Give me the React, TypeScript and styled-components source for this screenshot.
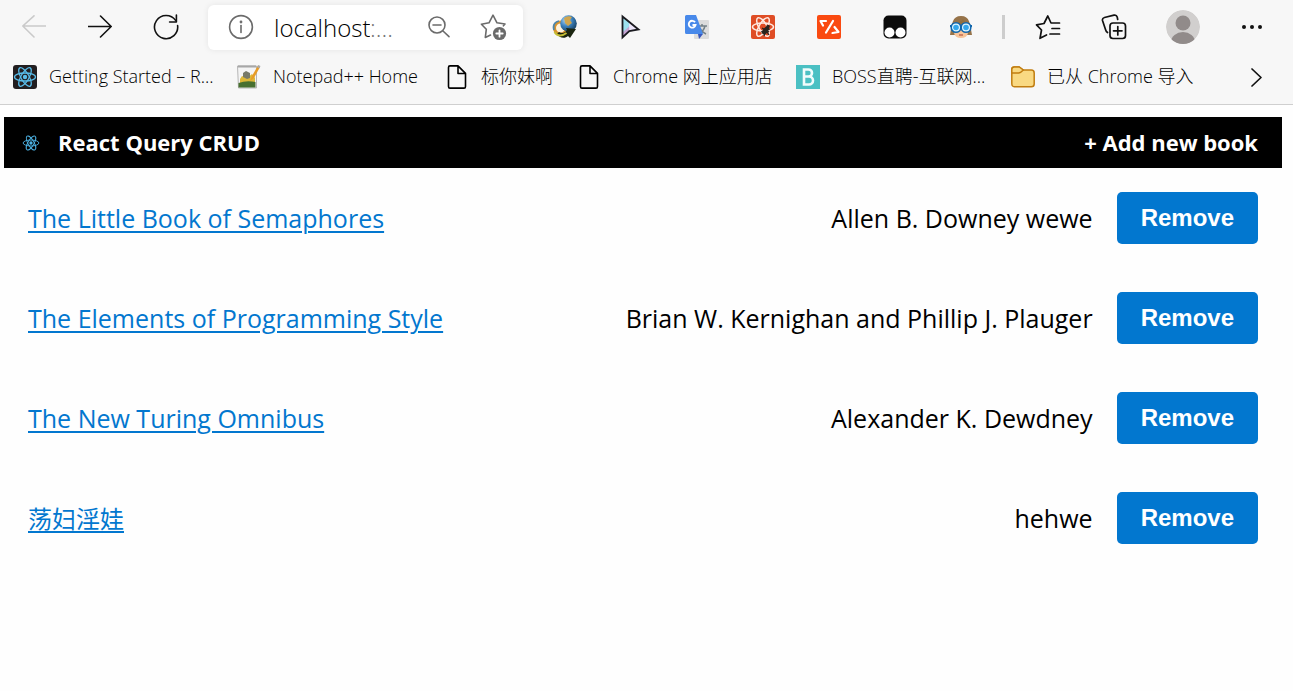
import React from "react";
import styled, { createGlobalStyle } from "styled-components";

const GlobalStyle = createGlobalStyle`
  *, *::before, *::after { box-sizing: border-box; }
  html { background: #fefefe; }
  body {
    margin: 0;
    color: #000;
    font-family: "Open Sans", "Noto Sans CJK SC", sans-serif;
    font-size: 24px;
  }
`;

const BrowserChrome = styled.header`
  background: #f7f7f7;
  border-bottom: 1px solid #cfcfcf;
  font-weight: 300;
`;

const Toolbar = styled.div`
  display: flex;
  align-items: center;
  height: 54px;
  padding: 0 8px 0 1px;
`;

const ToolButton = styled.button<{ $wide?: boolean }>`
  display: flex;
  flex: none;
  align-items: center;
  justify-content: center;
  width: ${(p) => (p.$wide ? 72 : 66)}px;
  height: 54px;
  padding: 0;
  border: 0;
  background: none;
  color: #111;

  &:disabled {
    color: #cacaca;
  }
`;

const AddressBar = styled.div`
  display: flex;
  flex: 1;
  align-items: center;
  min-width: 0;
  height: 45px;
  margin: 0 9px;
  padding: 0 16px 0 20px;
  border-radius: 6px;
  background: #fff;
  box-shadow: 0 0 6px rgba(0, 0, 0, 0.08);
`;

const AddressButton = styled.button`
  display: flex;
  flex: none;
  padding: 0;
  border: 0;
  background: none;
  color: #6b6b6b;
`;

const AddressText = styled.div`
  display: flex;
  flex: 1;
  align-items: center;
  min-width: 0;
  margin-left: 20px;
  padding-top: 2px;
  color: #767676;
  line-height: 32px;
`;

const AddressInput = styled.input`
  width: 96px;
  padding: 0;
  border: 0;
  outline: 0;
  background: none;
  color: #000;
  font: inherit;
  font-size: 24px;
  field-sizing: content;
`;

const AddressTools = styled.div`
  display: flex;
  align-items: center;
  gap: 28px;
`;

const Separator = styled.span`
  flex: none;
  width: 3px;
  height: 24px;
  margin: 0 10px 0 8px;
  background: #cdcdcd;
`;

const BookmarkBar = styled.nav`
  display: flex;
  align-items: center;
  gap: 24px;
  height: 50px;
  padding: 0 25px 4px 13px;
`;

const Bookmark = styled.a`
  display: flex;
  flex: none;
  align-items: center;
  gap: 12px;
  color: #000;
  font-size: 18px;
  line-height: 22px;
  text-decoration: none;
  white-space: nowrap;
`;

const BookmarkLabel = styled.span<{ $width: number }>`
  width: ${(p) => p.$width}px;
  padding-bottom: 2px;
`;

const MoreBookmarks = styled.button`
  display: flex;
  margin-left: auto;
  padding: 0;
  border: 0;
  background: none;
  color: #111;
`;

const Page = styled.main`
  margin: 12px 11px 0 4px;
`;

const NavBar = styled.div`
  display: flex;
  align-items: center;
  justify-content: space-between;
  height: 51px;
  padding: 0 24px 0 18px;
  background: #000;
`;

const NavLink = styled.a`
  display: flex;
  align-items: center;
  gap: 18px;
  color: #fff;
  font-size: 22px;
  font-weight: 700;
  line-height: 30px;
  text-decoration: none;
`;

const NavLabel = styled.span`
  padding-bottom: 2px;
`;

const BookList = styled.ul`
  margin: 0;
  padding: 0;
  list-style: none;
`;

const BookRow = styled.li`
  display: flex;
  align-items: center;
  gap: 24px;
  padding: 24px;
  font-size: 25px;
  line-height: 48px;
`;

const BookTitle = styled.span`
  margin-right: auto;
`;

const BookLink = styled.a`
  color: #0277cf;
  text-decoration: underline;
  text-decoration-thickness: 2px;
  text-underline-offset: 3px;

  &:lang(zh) {
    font-size: 24px;
  }
`;

const RemoveButton = styled.button`
  height: 52px;
  padding: 0 24px;
  border: 0;
  border-radius: 5px;
  background: #0277cf;
  color: #fff;
  font-family: "Liberation Sans", Arial, sans-serif;
  font-size: 24px;
  font-weight: 700;
`;

const line = { fill: "none", stroke: "currentColor", strokeWidth: 1.6, strokeLinecap: "round", strokeLinejoin: "round" } as const;

const BackIcon = () => (
  <svg width="24" height="24" viewBox="0 0 24 24" {...line}><path d="M23.5 11H.8M12 .8.8 11 12 22" /></svg>
);
const ForwardIcon = () => (
  <svg width="24" height="24" viewBox="0 0 24 24" {...line}><path d="M.5 11.500h22.700M12.500 1 23.200 11.500 12.500 22" /></svg>
);
const ReloadIcon = () => (
  <svg width="26" height="26" viewBox="0 0 26 26" {...line} strokeWidth="1.600">
    <path d="M24.600 11.500A11.600 11.600 0 1 1 22.600 6.400" /><path d="M23.400 1v7H16.600" />
  </svg>
);
const InfoIcon = () => (
  <svg width="26" height="26" viewBox="0 0 26 26" {...line}>
    <circle cx="13" cy="13" r="11.400" /><path d="M13 11.500v7" /><circle cx="13" cy="8" r=".6" fill="currentColor" />
  </svg>
);
const ZoomOutIcon = () => (
  <svg width="24" height="24" viewBox="0 0 24 24" {...line}>
    <circle cx="10" cy="10" r="8" /><path d="M6 10h8M16 16l6 5.600" />
  </svg>
);
const AddFavoriteIcon = () => (
  <svg width="28" height="28" viewBox="0 0 28 28" {...line}>
    <path d="M11.500 22 6.300 24.400 7.300 16.300 2.400 11.200 10 9.800 14 2.200l4 7.600 8 1.200-1.600 1.800" />
    <circle cx="20.500" cy="20.500" r="6.600" fill="currentColor" stroke="none" />
    <path d="M20.500 17.300v6.400M17.300 20.500h6.400" stroke="#fff" strokeWidth="1.800" />
  </svg>
);

const DownloaderIcon = () => (
  <svg width="26" height="26" viewBox="0 0 26 26">
    <defs>
      <radialGradient id="globe" cx=".35" cy=".3" r=".8">
        <stop offset="0" stopColor="#b5dcf6" /><stop offset=".45" stopColor="#3e83bf" /><stop offset="1" stopColor="#123755" />
      </radialGradient>
    </defs>
    <ellipse cx="8.500" cy="14" rx="6" ry="6" fill="#fff3dc" stroke="#d9932d" strokeWidth="3" />
    <path d="M2 16Q0 9 7 7" fill="none" stroke="#4d86ab" strokeWidth="1.800" />
    <circle cx="16.500" cy="9.500" r="8.300" fill="url(#globe)" />
    <path d="M12 4q4-3 8-1l-2 3 2 3-4 3-3-3z" fill="#d0a64e" />
    <path d="M7 18c3 2 6 1 8-2l-1-2 10 1-6 9-2-2c-3 3-9 2-11-2z" fill="#1b2510" />
    <path d="M2.500 18c3 5 8 4 12 1" fill="none" stroke="#c3bd35" strokeWidth="2" />
  </svg>
);
const PointerIcon = () => (
  <svg width="24" height="26" viewBox="0 0 24 26">
    <path d="M3.500 3 19.500 15.500 10.300 17 3.500 23.500z" fill="#c5a5d3" />
    <path d="M3.500 3 13 10 4 18z" fill="#9ce1ef" /><path d="M10 8 19.500 15.500 10.300 17z" fill="#eee7fb" />
    <path d="M3.500 2.500 19.500 15.500 10.300 17 3.500 23.500z" fill="none" stroke="#1b1b20" strokeWidth="1.800" />
  </svg>
);
const TranslateIcon = () => (
  <svg width="26" height="26" viewBox="0 0 26 26">
    <rect x="10" y="6" width="15" height="19" rx="1" fill="#dcdcdc" />
    <path d="M14 12h9M18 10v2M21 12c-1 4-3 6-6 8M16 14c1 3 4 5 6 6" fill="none" stroke="#738087" strokeWidth="1.500" />
    <path d="M2.500 1H12l7 19H2.500A1.500 1.500 0 0 1 1 18.500v-16A1.500 1.500 0 0 1 2.500 1z" fill="#4889ea" />
    <path d="M14 20h5l-4 5z" fill="#3858bd" />
    <path d="M11 8.300A3.400 3.400 0 1 0 11.500 11H8.500" fill="none" stroke="#fff" strokeWidth="1.900" />
  </svg>
);
const Orbits = () => (
  <>
    <ellipse cx="12" cy="12" rx="10.500" ry="4" />
    <ellipse cx="12" cy="12" rx="10.500" ry="4" transform="rotate(60 12 12)" />
    <ellipse cx="12" cy="12" rx="10.500" ry="4" transform="rotate(120 12 12)" />
  </>
);
const Atom = () => (
  <svg width="18" height="18" viewBox="0 0 24 24" fill="none" stroke="#4db4e6" strokeWidth="1.200">
    <circle cx="12" cy="12" r="2.200" fill="#4db4e6" stroke="none" />
    <Orbits />
  </svg>
);
const ReactDevIcon = () => (
  <svg width="24" height="24" viewBox="0 0 24 24">
    <rect width="24" height="24" rx="2" fill="#df4d25" />
    <g fill="none" stroke="#ffeae2" strokeWidth="1.500"><Orbits /></g>
    <ellipse cx="14.500" cy="15.500" rx="2.600" ry="4.500" fill="#29251f" transform="rotate(35 14.500 15.500)" />
    <circle cx="17" cy="11.500" r="1.800" fill="#29251f" />
    <path d="M11 13l7 4M10 17l9-3M13 21l1-3M18 20l-2-3" stroke="#29251f" strokeWidth="1.300" />
  </svg>
);
const CodeIcon = () => (
  <svg width="24" height="24" viewBox="0 0 24 24">
    <rect width="24" height="24" rx="2" fill="#fa4a11" />
    <path d="M9 6H3.500l2.500 4.500M16 6 9 17.500M17.500 12l4 5-6 1" fill="none" stroke="#fff" strokeWidth="2.200" strokeLinejoin="round" strokeLinecap="round" />
  </svg>
);
const MonkeyIcon = () => (
  <svg width="24" height="24" viewBox="0 0 24 24">
    <rect x=".5" y=".5" width="23" height="23" rx="5" fill="#0b0b0b" />
    <circle cx="6.500" cy="17.500" r="5" fill="#fff" /><circle cx="17.500" cy="17.500" r="5" fill="#fff" />
  </svg>
);
const GogglesIcon = () => (
  <svg width="24" height="24" viewBox="0 0 24 24">
    <path d="M1 20C3 9 3 1 12 1s9 8 11 19z" fill="#967349" />
    <path d="M5 11h14v7q-1 5-7 5t-7-5z" fill="#f8c59a" />
    <path d="M3 8Q11 9 14 4q2 4 7 4v3H3z" fill="#92703f" />
    <path d="M1 11h22" stroke="#1267ad" strokeWidth="2" />
    <circle cx="7" cy="12.500" r="4.800" fill="#e1f7ff" stroke="#1267ad" strokeWidth="1.600" />
    <circle cx="17" cy="12.500" r="4.800" fill="#e1f7ff" stroke="#1267ad" strokeWidth="1.600" />
    <circle cx="7" cy="12.500" r="2.800" fill="#34a7ec" /><circle cx="17" cy="12.500" r="2.800" fill="#34a7ec" />
    <path d="M10 20h4" stroke="#be654e" strokeWidth="1.400" />
  </svg>
);
const FavoritesIcon = () => (
  <svg width="26" height="26" viewBox="0 0 26 26" {...line} strokeWidth="1.700">
    <path d="M11.500 21 5 24.300 6.500 16 1.500 10.800 9 9.500 12.800 2 16 9h8.500M17 14.500h7.500M15 20h9.500" />
  </svg>
);
const CollectionsIcon = () => (
  <svg width="26" height="26" viewBox="0 0 26 26" {...line} strokeWidth="1.700">
    <rect x="9" y="9" width="15.500" height="15.500" rx="3" /><path d="M16.800 12.500v8.500M12.500 16.800H21" />
    <path d="M6.500 18.500Q5 17.500 4.500 15.500L1.500 6.500Q1 4.200 3.500 3.500L13 1.200q2.500-.5 3.200 1.800l.5 2.500" />
  </svg>
);
const ProfileIcon = () => (
  <svg width="34" height="34" viewBox="0 0 34 34">
    <clipPath id="profile"><circle cx="17" cy="17" r="17" /></clipPath>
    <g clipPath="url(#profile)">
      <circle cx="17" cy="17" r="17" fill="#d1cfce" />
      <circle cx="17" cy="13" r="7.500" fill="#918b8a" /><ellipse cx="17" cy="32" rx="12" ry="10" fill="#918b8a" />
    </g>
  </svg>
);
const MenuIcon = () => (
  <svg width="22" height="6" viewBox="0 0 22 6" fill="currentColor">
    <circle cx="3" cy="3" r="2" /><circle cx="11" cy="3" r="2" /><circle cx="19" cy="3" r="2" />
  </svg>
);

const ReactBookmarkIcon = () => (
  <svg width="24" height="24" viewBox="0 0 24 24">
    <rect width="24" height="24" rx="3" fill="#221e20" />
    <g fill="none" stroke="#59bce9" strokeWidth="1.300"><Orbits /></g>
    <circle cx="12" cy="12" r="2.200" fill="#59bce9" />
  </svg>
);
const NotepadIcon = () => (
  <svg width="24" height="24" viewBox="0 0 24 24">
    <path d="M.5 1h19v22H1.500z" fill="#f4f4f4" stroke="#b5b5b5" />
    <path d="M1 .5h18v2H1z" fill="#a7a7a7" />
    <path d="M3 14l2-3 5 2 5-4 3 4v5H3z" fill="#ddb838" />
    <path d="M6 12V8l3-2 4 2v5l-3 1z" fill="#777a68" />
    <path d="M1.500 18q8-3 17-1v5.500h-17z" fill="#487030" />
    <path d="m13 16 2-5L21 .5l2 1.500-6 11z" fill="#e79c27" /><path d="m20 2 1.200-2L23.500 1l-1.300 2.500z" fill="#aaa" />
  </svg>
);
const FileIcon = () => (
  <svg width="24" height="24" viewBox="0 0 24 24" {...line} strokeWidth="1.600">
    <path d="M3.500 2.500Q3.500.900 5 .900h8l7.500 7.500v13q0 1.700-1.500 1.700H5q-1.500 0-1.500-1.700zM13 1v7.500h7.500" />
  </svg>
);
const BossIcon = () => (
  <svg width="24" height="24" viewBox="0 0 24 24">
    <rect width="24" height="24" fill="#4bc0c3" />
    <path d="M8 4.500h4.500a3.500 3.500 0 0 1 0 7H8zM8 11.500h5a4 4 0 0 1 0 8H8z" fill="none" stroke="#f1fcfc" strokeWidth="2.600" />
  </svg>
);
const FolderIcon = () => (
  <svg width="24" height="24" viewBox="0 0 24 24" fill="#f9d982" stroke="#c17d10" strokeWidth="1.500" strokeLinejoin="round">
    <path d="M.8 18.500v-14Q.8 2 3.300 2h5l4 3h8q2.900 0 2.900 2.900v11q0 2.800-2.900 2.800h-17Q.8 21.700.8 18.500z" />
    <path d="M.8 8h7q2-.3 4.500-3L8.300 2h-5Q.8 2 .8 4.500z" />
  </svg>
);
const ChevronIcon = () => (
  <svg width="24" height="24" viewBox="0 0 24 24" {...line} strokeWidth="1.700"><path d="m8 4 9 8.500L8 21" /></svg>
);

const extensions = [
  { name: "Download manager", icon: <DownloaderIcon /> },
  { name: "Custom cursor", icon: <PointerIcon /> },
  { name: "Translate", icon: <TranslateIcon /> },
  { name: "React developer tools", icon: <ReactDevIcon /> },
  { name: "Code tools", icon: <CodeIcon /> },
  { name: "User scripts", icon: <MonkeyIcon /> },
  { name: "Goggles", icon: <GogglesIcon /> },
];

const bookmarks = [
  { label: "Getting Started – R...", width: 164, icon: <ReactBookmarkIcon /> },
  { label: "Notepad++ Home", width: 148, icon: <NotepadIcon /> },
  { label: "标你妹啊", width: 72, icon: <FileIcon /> },
  { label: "Chrome 网上应用店", width: 159, icon: <FileIcon /> },
  { label: "BOSS直聘-互联网...", width: 155, icon: <BossIcon /> },
  { label: "已从 Chrome 导入", width: 145, icon: <FolderIcon /> },
];

const books = [
  { title: "The Little Book of Semaphores", author: "Allen B. Downey wewe", lang: "en" },
  { title: "The Elements of Programming Style", author: "Brian W. Kernighan and Phillip J. Plauger", lang: "en" },
  { title: "The New Turing Omnibus", author: "Alexander K. Dewdney", lang: "en" },
  { title: "荡妇淫娃", author: "hehwe", lang: "zh" },
];

export default function App() {
  return (
    <>
      <GlobalStyle />
      <BrowserChrome>
        <Toolbar>
          <ToolButton aria-label="Back" disabled><BackIcon /></ToolButton>
          <ToolButton aria-label="Forward"><ForwardIcon /></ToolButton>
          <ToolButton aria-label="Reload"><ReloadIcon /></ToolButton>
          <AddressBar>
            <AddressButton aria-label="Site information"><InfoIcon /></AddressButton>
            <AddressText>
              <AddressInput aria-label="Address" defaultValue="localhost" />
              <span>:...</span>
            </AddressText>
            <AddressTools>
              <AddressButton aria-label="Zoom out"><ZoomOutIcon /></AddressButton>
              <AddressButton aria-label="Add to favorites"><AddFavoriteIcon /></AddressButton>
            </AddressTools>
          </AddressBar>
          {extensions.map((e) => (
            <ToolButton key={e.name} aria-label={e.name}>{e.icon}</ToolButton>
          ))}
          <Separator />
          <ToolButton aria-label="Favorites"><FavoritesIcon /></ToolButton>
          <ToolButton aria-label="Collections"><CollectionsIcon /></ToolButton>
          <ToolButton aria-label="Profile" $wide><ProfileIcon /></ToolButton>
          <ToolButton aria-label="Menu"><MenuIcon /></ToolButton>
        </Toolbar>
        <BookmarkBar>
          {bookmarks.map((b) => (
            <Bookmark key={b.label} href="#">
              {b.icon}
              <BookmarkLabel $width={b.width}>{b.label}</BookmarkLabel>
            </Bookmark>
          ))}
          <MoreBookmarks aria-label="More bookmarks"><ChevronIcon /></MoreBookmarks>
        </BookmarkBar>
      </BrowserChrome>
      <Page>
        <NavBar>
          <NavLink href="#">
            <Atom />
            <NavLabel>React Query CRUD</NavLabel>
          </NavLink>
          <NavLink href="#"><NavLabel>+ Add new book</NavLabel></NavLink>
        </NavBar>
        <BookList>
          {books.map((b) => (
            <BookRow key={b.title}>
              <BookTitle><BookLink href="#" lang={b.lang}>{b.title}</BookLink></BookTitle>
              <span>{b.author}</span>
              <RemoveButton>Remove</RemoveButton>
            </BookRow>
          ))}
        </BookList>
      </Page>
    </>
  );
}
